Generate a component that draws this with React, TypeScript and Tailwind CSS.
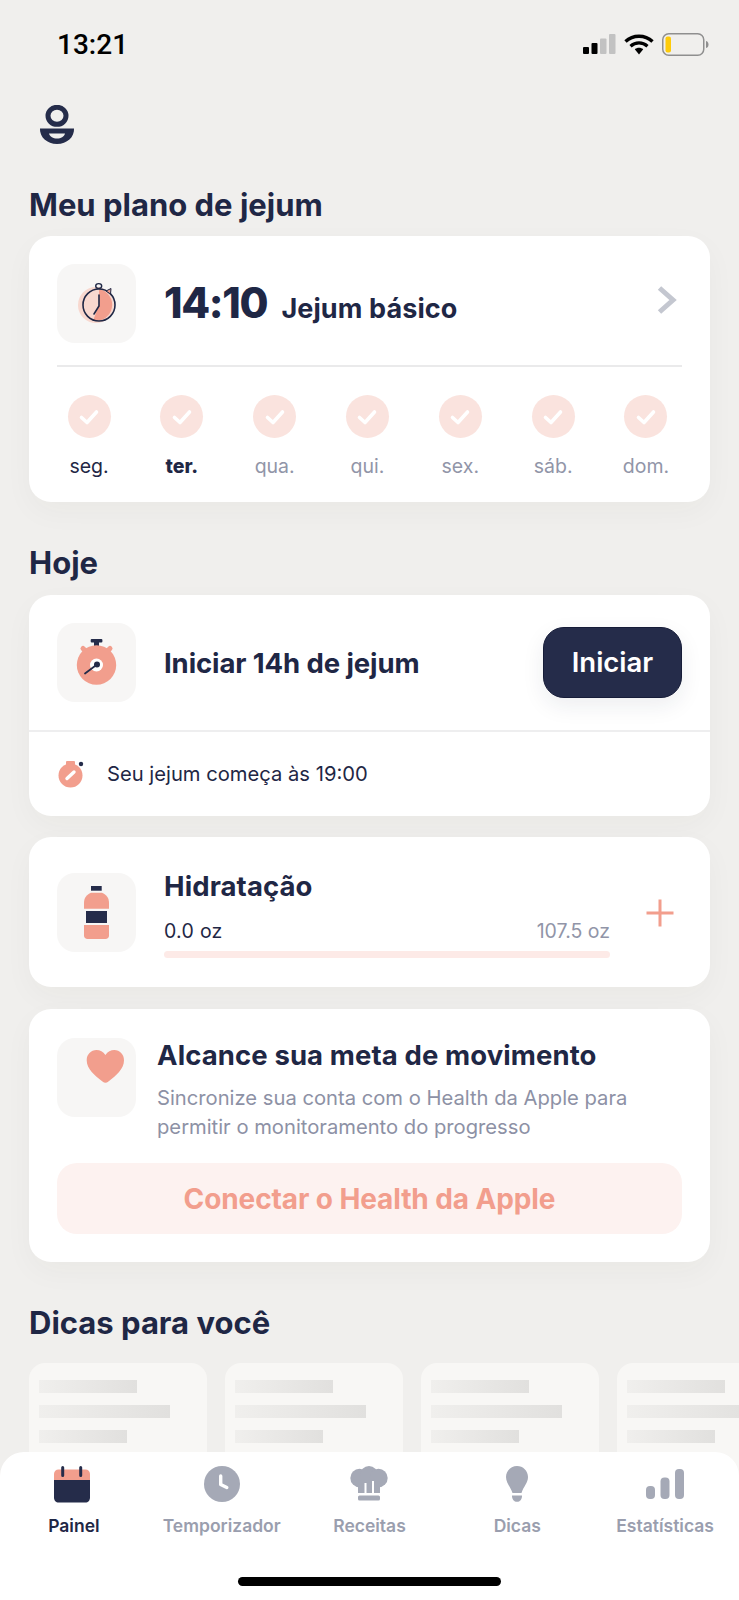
const days = [
  { label: "seg.", tone: "text-[#1f2745]" },
  { label: "ter.", tone: "font-extrabold text-[#1f2745]" },
  { label: "qua.", tone: "text-[#9195a8]" },
  { label: "qui.", tone: "text-[#9195a8]" },
  { label: "sex.", tone: "text-[#9195a8]" },
  { label: "sáb.", tone: "text-[#9195a8]" },
  { label: "dom.", tone: "text-[#9195a8]" },
];

function StatusIcons() {
  return (
    <div className="flex items-center">
      <svg width="33" height="20" viewBox="0 0 33 20">
        <rect x="0" y="13" width="6" height="7" rx="1" fill="#000" />
        <rect x="8.5" y="9" width="6" height="11" rx="1" fill="#000" />
        <rect x="17" y="4.5" width="6.5" height="15.5" rx="1" fill="#c2c2c2" />
        <rect x="26" y="0" width="6.5" height="20" rx="1" fill="#c2c2c2" />
      </svg>
      <svg width="30" height="21" viewBox="0 0 30 21" className="ml-[8px]">
        <path d="M1.5 7.5C9 0.5 21 0.5 28.5 7.5" fill="none" stroke="#000" strokeWidth="3.4" />
        <path d="M6.5 12.2C11.5 7.8 18.5 7.8 23.5 12.2" fill="none" stroke="#000" strokeWidth="3.2" />
        <path d="M10.8 15.2L15 20.5L19.2 15.2C16.8 13.2 13.2 13.2 10.8 15.2Z" fill="#000" />
      </svg>
      <svg width="47" height="23" viewBox="0 0 47 23" className="ml-[8px]">
        <rect x="0.75" y="0.75" width="41" height="21.5" rx="6" fill="none" stroke="#8f8f8f" strokeWidth="1.5" />
        <rect x="3.5" y="3.5" width="5.5" height="16" rx="2" fill="#fecb0a" />
        <path d="M44 8C46 8.5 46.5 10 46.5 11.5C46.5 13 46 14.5 44 15Z" fill="#8f8f8f" />
      </svg>
    </div>
  );
}

function PersonIcon() {
  return (
    <svg width="36" height="39" viewBox="0 0 36 39" className="ml-[39px] mt-[17px]">
      <ellipse cx="18" cy="10.8" rx="9" ry="8.5" fill="none" stroke="#252c4a" strokeWidth="5" />
      <path d="M1 23.5H35C35.5 32 28 39 18 39C8 39 0.5 32 1 23.5Z" fill="#252c4a" />
      <path d="M10 28.5H26C25 32 22 33.5 18 33.5C14 33.5 11 32 10 28.5Z" fill="#f0efed" />
    </svg>
  );
}

function IconBox({ children }: { children: React.ReactNode }) {
  return (
    <div className="h-[79px] w-[79px] shrink-0 rounded-[18px] bg-[#f7f6f5]">
      <svg width="79" height="79" viewBox="0 0 79 79">
        {children}
      </svg>
    </div>
  );
}

function Title({ children }: { children: React.ReactNode }) {
  return <h2 className="mt-[43px] h-9 text-[31px] font-bold leading-9 text-[#1f2745]">{children}</h2>;
}

function Card({ className, children }: { className: string; children: React.ReactNode }) {
  return <section className={`rounded-[22px] bg-white shadow-[0_10px_30px_rgba(60,50,40,0.035)] ${className}`}>{children}</section>;
}

function Check() {
  return (
    <svg width="22" height="18" viewBox="0 0 22 18">
      <path d="M3.5 9.5L9 14.5L18.5 4" fill="none" stroke="#fff" strokeWidth="3.6" strokeLinejoin="round" strokeLinecap="round" />
    </svg>
  );
}

function TipCard() {
  return (
    <div className="h-[120px] w-[178px] shrink-0 rounded-[16px] bg-[#f8f7f5] px-[10px] pt-[17px]">
      <div className="h-[13px] w-[98px] bg-gradient-to-r from-[#f0efed] to-[#e1e0de]" />
      <div className="mt-3 h-[13px] w-[131px] bg-gradient-to-r from-[#f0efed] to-[#e1e0de]" />
      <div className="mt-3 h-[13px] w-[88px] bg-gradient-to-r from-[#f0efed] to-[#e1e0de]" />
    </div>
  );
}

function Tab({ label, active, icon }: { label: string; active?: boolean; icon: React.ReactNode }) {
  return (
    <div className="flex flex-col items-center">
      <div className="flex h-[38px] items-center justify-center">{icon}</div>
      <span className={`mt-[11px] whitespace-nowrap text-[17.5px] font-semibold leading-6 ${active ? "text-[#1f2745]" : "text-[#9a9eae]"}`}>
        {label}
      </span>
    </div>
  );
}

export default function App() {
  return (
    <div className="relative h-[1600px] w-[739px] overflow-hidden bg-[#f0efed] font-['Inter',sans-serif]">
      <header className="flex h-[88px] items-center justify-between pl-[57px] pr-[30px]">
        <span className="mt-[2px] font-['Roboto',sans-serif] text-[28px] font-medium leading-none text-black">13:21</span>
        <StatusIcons />
      </header>
      <PersonIcon />

      <main className="px-[29px]">
        <Title>Meu plano de jejum</Title>
        <Card className="mt-[13px] h-[266px] px-7 pt-7">
          <div className="flex items-center">
            <IconBox>
              <circle cx="39" cy="41" r="18" fill="#f8d8cf" />
              <path d="M42 25A16 16 0 1 1 36 56.7L42 41Z" fill="#f29e8d" />
              <circle cx="42" cy="41" r="16" fill="none" stroke="#1f2745" strokeWidth="1.6" />
              <path d="M42 31V42L37 50" fill="none" stroke="#1f2745" strokeWidth="1.6" strokeLinecap="round" />
              <ellipse cx="41.7" cy="22" rx="3" ry="2.4" fill="none" stroke="#1f2745" strokeWidth="1.4" />
              <path d="M49 27L54 24.5L53.5 30Z" fill="#f29e8d" stroke="#1f2745" strokeWidth="1" />
            </IconBox>
            <span className="ml-7 mt-[-2px] text-[42px] font-extrabold leading-none tracking-[-1.3px] text-[#1f2745]">14:10</span>
            <span className="ml-[14px] mt-[10px] text-[27px] font-bold leading-none tracking-[0.1px] text-[#1f2745]">Jejum básico</span>
            <svg width="22" height="30" viewBox="0 0 22 30" className="mb-[8px] ml-auto mr-1">
              <path d="M3.5 3L17 15L3.5 27" fill="none" stroke="#c4c7d0" strokeWidth="5" />
            </svg>
          </div>
          <div className="mt-[22px] h-[2px] bg-[#eaeaeb]" />
          <div className="mr-1 mt-[28px] flex justify-between">
            {days.map((day) => (
              <div key={day.label} className="flex w-16 flex-col items-center">
                <div className="flex h-[43px] w-[43px] items-center justify-center rounded-full bg-[#fae3de]">
                  <Check />
                </div>
                <span className={`mt-[16px] text-[19.5px] leading-6 ${day.tone}`}>{day.label}</span>
              </div>
            ))}
          </div>
        </Card>

        <Title>Hoje</Title>
        <Card className="mt-[14px] h-[221px]">
          <div className="flex h-[137px] items-center border-b-2 border-[#eeeeef] pl-7 pr-7">
            <IconBox>
              <path d="M26 25.5L29 28.5M53 25.5L50 28.5" stroke="#f29e8d" strokeWidth="5" strokeLinecap="round" />
              <rect x="33.7" y="16" width="11.7" height="3.5" rx="1" fill="#252c4a" />
              <rect x="37" y="19" width="5" height="5" fill="#252c4a" />
              <circle cx="39.5" cy="42" r="19.7" fill="#f29e8d" />
              <circle cx="39.5" cy="42" r="6.5" fill="#fff" />
              <circle cx="40" cy="41.5" r="3" fill="#252c4a" />
              <path d="M40 41.5L28 50.5" stroke="#252c4a" strokeWidth="1.8" strokeLinecap="round" />
            </IconBox>
            <span className="ml-7 mt-[2px] text-[27.5px] font-bold tracking-[-0.1px] text-[#1f2745]">Iniciar 14h de jejum</span>
            <button className="ml-auto h-[71px] w-[139px] rounded-[21px] border border-[#161c38] bg-[#252c4a] text-[27.5px] font-semibold text-white shadow-[0_8px_22px_rgba(30,35,70,0.08)]">
              Iniciar
            </button>
          </div>
          <div className="flex h-[84px] items-center pl-[29px]">
            <svg width="28" height="30" viewBox="0 0 28 30">
              <rect x="8" y="2" width="9" height="5" rx="1" fill="#f29e8d" />
              <circle cx="12.5" cy="16.5" r="12" fill="#f29e8d" />
              <path d="M16 13L9 19.5" stroke="#fff" strokeWidth="3.4" strokeLinecap="round" />
              <circle cx="23" cy="5" r="2.2" fill="#252c4a" />
            </svg>
            <span className="ml-[21px] text-[20.2px] font-normal text-[#1f2745]">Seu jejum começa às 19:00</span>
          </div>
        </Card>

        <Card className="mt-[21px] flex h-[150px] items-start pl-7 pr-[36px] pt-9">
          <IconBox>
            <rect x="34" y="13" width="10.7" height="4.7" fill="#252c4a" />
            <path d="M34 19.7H45C49.5 21.5 52 25 52 30V35.7H27V30C27 25 29.5 21.5 34 19.7Z" fill="#f29e8d" />
            <rect x="29" y="38" width="21" height="12" fill="#252c4a" />
            <path d="M27 52H52V62.5C52 64.5 50.5 66 48.5 66H30.5C28.5 66 27 64.5 27 62.5Z" fill="#f29e8d" />
          </IconBox>
          <div className="ml-7 mt-[-5px] w-[446px]">
            <div className="text-[27.5px] font-bold leading-9 tracking-[0.1px] text-[#1f2745]">Hidratação</div>
            <div className="mt-[15px] flex justify-between text-[19.5px] leading-6">
              <span className="tracking-[0.3px] text-[#1f2745]">0.0 oz</span>
              <span className="text-[#9195a8]">107.5 oz</span>
            </div>
            <div className="mt-[8px] h-[7px] rounded-full bg-[#fdeae7]" />
          </div>
          <svg width="28" height="28" viewBox="0 0 28 28" className="ml-auto mt-[26px]">
            <path d="M14 0.5V27.5M0.5 14H27.5" stroke="#f29e8d" strokeWidth="3" />
          </svg>
        </Card>

        <Card className="mt-[22px] h-[253px] px-7 pt-[29px]">
          <div className="flex items-start">
            <IconBox>
              <path d="M48.5 44.7C47.5 44.7 46.5 44.2 45.5 43.4C38 37.5 29.7 31 29.7 22.2C29.7 16.3 34 12 39.5 12C43 12 46.2 13.8 48.4 17C50.6 13.8 53.8 12 57.3 12C62.8 12 67 16.3 67 22.2C67 31 59 37.5 51.4 43.4C50.4 44.2 49.5 44.7 48.5 44.7Z" fill="#f29e8d" />
            </IconBox>
            <div className="ml-[21px] mt-[-1px]">
              <div className="text-[27.5px] font-bold leading-9 tracking-[0.1px] text-[#1f2745]">Alcance sua meta de movimento</div>
              <p className="mt-[11px] text-[20.2px] leading-[28.5px] text-[#8d91a5]">
                Sincronize sua conta com o Health da Apple para
                <br />
                permitir o monitoramento do progresso
              </p>
            </div>
          </div>
          <div className="mt-[22px] flex h-[71px] items-center justify-center rounded-[20px] bg-[#fdf2f0] text-[28px] font-bold tracking-[-0.1px] text-[#f29e8d]">
            Conectar o Health da Apple
          </div>
        </Card>

        <Title>Dicas para você</Title>
        <div className="mt-[22px] flex gap-[18px]">
          <TipCard />
          <TipCard />
          <TipCard />
          <TipCard />
        </div>
      </main>

      <nav className="absolute inset-x-0 bottom-0 h-[148px] rounded-t-[24px] bg-white pt-[13px]">
        <div className="grid grid-cols-5">
          <Tab
            active
            label="Painel"
            icon={
              <svg width="36" height="37" viewBox="0 0 36 37" className="-ml-1">
                <path d="M0 14V8C0 5.5 2 3.5 4.5 3.5H31.5C34 3.5 36 5.5 36 8V14Z" fill="#f29e8d" />
                <path d="M0 14H36V31.5C36 34.5 34 36.5 31.5 36.5H4.5C2 36.5 0 34.5 0 31.5Z" fill="#252c4a" />
                <path d="M8.7 1.5V9.5M26.7 1.5V9.5" stroke="#252c4a" strokeWidth="3" strokeLinecap="round" />
              </svg>
            }
          />
          <Tab
            label="Temporizador"
            icon={
              <svg width="36" height="36" viewBox="0 0 36 36">
                <circle cx="18" cy="18" r="18" fill="#a5a9b6" />
                <path d="M16.7 10V18.5L22.8 21.5" fill="none" stroke="#fff" strokeWidth="3.4" strokeLinecap="round" strokeLinejoin="round" />
              </svg>
            }
          />
          <Tab
            label="Receitas"
            icon={
              <svg width="38" height="36" viewBox="0 0 38 36">
                <circle cx="9.5" cy="12" r="9.2" fill="#a5a9b6" />
                <circle cx="19" cy="9" r="9" fill="#a5a9b6" />
                <circle cx="28.5" cy="12" r="9.2" fill="#a5a9b6" />
                <rect x="8" y="12" width="22" height="15" fill="#a5a9b6" />
                <path d="M15.5 17V27M23 15V27" stroke="#fff" strokeWidth="2" />
                <rect x="8" y="29.5" width="22" height="5" rx="1.5" fill="#a5a9b6" />
              </svg>
            }
          />
          <Tab
            label="Dicas"
            icon={
              <svg width="22" height="36" viewBox="0 0 22 36">
                <path d="M11 0C17 0 22 4.8 22 11C22 17 17.5 20.5 15.5 27H6.5C4.5 20.5 0 17 0 11C0 4.8 5 0 11 0Z" fill="#a5a9b6" />
                <path d="M6 29.5H16C16 33.5 14 35.8 11 35.8C8 35.8 6 33.5 6 29.5Z" fill="#a5a9b6" />
              </svg>
            }
          />
          <Tab
            label="Estatísticas"
            icon={
              <svg width="38" height="30" viewBox="0 0 38 30">
                <rect x="0" y="17" width="9" height="13" rx="4" fill="#a5a9b6" />
                <rect x="14.5" y="8.5" width="9" height="21.5" rx="4" fill="#a5a9b6" />
                <rect x="29" y="0" width="9" height="30" rx="4" fill="#a5a9b6" />
              </svg>
            }
          />
        </div>
        <div className="absolute bottom-[14px] left-[238px] h-[9px] w-[263px] rounded-full bg-black" />
      </nav>
    </div>
  );
}
